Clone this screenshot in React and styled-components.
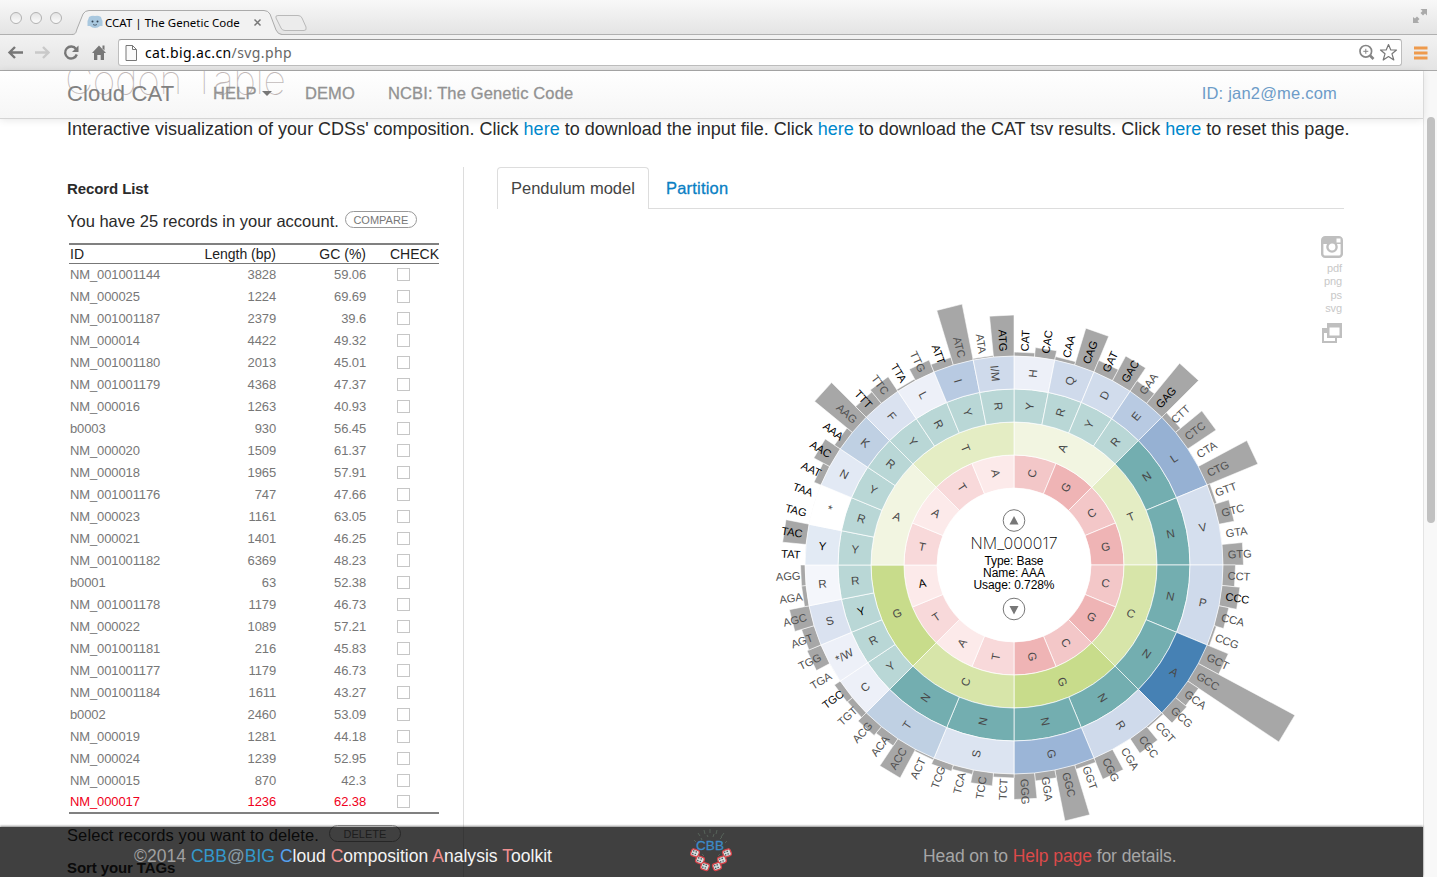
import React from 'react';
import styled, { createGlobalStyle } from 'styled-components';

const Global = createGlobalStyle`
  * { box-sizing: border-box; }
  html, body { margin: 0; padding: 0; height: 877px; overflow: hidden; background: #fff; }
  body { font-family: "Liberation Sans", Arial, sans-serif; color: #2b2b2b; }
`;

const Window = styled.div`
  display: flex; flex-direction: column; width: 1437px; height: 877px; overflow: hidden;
`;
const TitleBar = styled.div`
  display: flex; align-items: flex-end; height: 35px; flex: none; position: relative;
  background: linear-gradient(#f8f8f8, #e4e4e4); border-bottom: 1px solid #b0b0b0;
`;
const Lights = styled.div`
  display: flex; gap: 8px; padding: 0 0 10px 10px; width: 72px;
`;
const Light = styled.i`
  width: 12px; height: 12px; border-radius: 50%; border: 1px solid #b2b2b2;
  background: linear-gradient(#e4e4e4, #fbfbfb);
`;
const TabArea = styled.div`
  position: relative; width: 240px; height: 35px; margin-bottom: -1px;
`;
const TabShape = styled.svg`
  position: absolute; left: 0; top: 0;
`;
const TabContent = styled.div`
  position: relative; display: flex; align-items: center; height: 26px; margin: 9px 0 0 15px;
`;
const TabLabel = styled.span`
  font: 11.5px "Noto Sans", sans-serif; color: #000; letter-spacing: 0.02px; margin-left: 2px; white-space: nowrap; width: 148px;
`;
const Expand = styled.svg`
  margin: 0 8px 10px auto;
`;
const Toolbar = styled.div`
  display: flex; align-items: center; height: 36px; flex: none; padding: 0 9px 0 7px;
  background: linear-gradient(#f2f2f2, #e4e4e4); border-bottom: 1px solid #a9a9a9;
`;
const NavIcons = styled.div`
  display: flex; gap: 12px; width: 111px;
`;
const Address = styled.div`
  display: flex; align-items: center; flex: 1; height: 27px; background: #fff; padding: 0 3px 0 6px;
  border: 1px solid #bdbdbd; border-top-color: #989898; border-radius: 3px;
`;
const Url = styled.span`
  font: 14px "Noto Sans", sans-serif; color: #666; margin-left: 7px; flex: 1; letter-spacing: 0.38px;
  b { font-weight: 400; color: #000; }
`;
const Menu = styled.svg`
  margin-left: 12px;
`;
const Viewport = styled.div`
  display: flex; position: relative; height: 806px; flex: none;
`;
const Page = styled.main`
  width: 1423px; height: 806px; overflow: hidden; background: #fff;
`;
const Scroll = styled.div`
  width: 14px; padding: 46px 2px 0 3px; border-left: 1px solid #e4e4e4; background: #f8f8f8;
  &::before { content: ''; display: block; height: 406px; width: 8px; border-radius: 4px; background: #c1c1c1; }
`;
const Navbar = styled.nav`
  position: absolute; left: 0; top: 0; width: 1423px; height: 48px; z-index: 3;
  display: flex; align-items: center; padding: 0 86px 3px 67px; white-space: nowrap;
  background: linear-gradient(rgba(255,255,255,.72), rgba(242,242,242,.72));
  border-bottom: 1px solid #d4d4d4; box-shadow: 0 1px 8px rgba(0,0,0,.1);
`;
const Brand = styled.span`
  font-size: 22px; color: #828282; width: 146px; letter-spacing: 0.15px; padding-top: 1px;
`;
const NavItem = styled.span`
  font-size: 16.5px; color: #929292; width: ${p => p.$w}px; -webkit-text-stroke: .3px #929292;
  display: flex; align-items: center; letter-spacing: ${p => p.$ls || 0}px;
`;
const Caret = styled.i`
  border: 5px solid transparent; border-top-color: #777; border-bottom: 0; margin-left: 5px;
`;
const User = styled.span`
  margin-left: auto; font-size: 16.5px; color: #6d9cc8; letter-spacing: .2px;
`;
const Title = styled.h1`
  margin: -14px 0 0 65px; font: 100 39px/46px Inter, "Liberation Sans", sans-serif; color: #200; white-space: nowrap;
  letter-spacing: -.4px; height: 46px;
`;
const Intro = styled.p`
  margin: 14px 0 0 67px; height: 24px; line-height: 24px; font-size: 18px; white-space: nowrap;
  a { color: #0088cc; }
`;
const Columns = styled.div`
  display: flex; margin-top: 26px; height: 720px;
`;
const Left = styled.section`
  width: 464px; border-right: 1px solid #ddd; padding: 12px 24px 0 67px; white-space: nowrap;
`;
const Heading = styled.h3`
  margin: 0; font-size: 15px; line-height: 20px; letter-spacing: -0.1px;
`;
const Sentence = styled.div`
  display: flex; align-items: center; font-size: 16.5px; line-height: 20px; margin-top: ${p => p.$mt}px; letter-spacing: ${p => p.$ls || 0}px;
`;
const Pill = styled.span`
  display: flex; align-items: center; justify-content: center; width: 72px; height: 17px; margin: -4px 0 0 ${p => p.$ml}px;
  border: 1px solid #999; border-radius: 9px; font-size: 11px; line-height: 16px; padding-top: 1px; color: #777; letter-spacing: 0;
`;
const Table = styled.div`
  margin: 12px 0 0 2px; width: 370px; border-top: 2px solid #808080; border-bottom: 2px solid #808080; height: 571px;
`;
const Row = styled.div`
  display: grid; grid-template-columns: 107px 100px 90px 73px; align-items: center;
  height: ${p => p.$head ? 19 : 22}px; line-height: 18px; font-size: ${p => p.$head ? 14 : 13}px;
  color: ${p => p.$head ? '#222' : p.$active ? '#f00020' : '#777'};
  border-bottom: ${p => p.$head ? '1px solid #777' : '0'};
  margin-top: ${p => p.$active ? -1 : 0}px;
  letter-spacing: ${p => p.$head ? 0 : -0.12}px;
  span { padding-left: 1px; }
  span:nth-child(2), span:nth-child(3) { text-align: right; padding: 0; }
  span:nth-child(4) { padding-left: 24px; }
`;
const Check = styled.i`
  width: 13px; height: 13px; border: 1px solid #c6c6c6; margin: -2px 0 0 31px;
`;
const Right = styled.section`
  width: 847px; margin-left: 33px;
`;
const Tabs = styled.div`
  display: flex; height: 42px; border-bottom: 1px solid #ddd; font-size: 16.5px; line-height: 41px; white-space: nowrap;
`;
const Tab = styled.div`
  height: 42px;
  ${p => p.$on ? `width: 152px; padding-left: 13px; border: 1px solid #ddd; border-bottom: 0; border-radius: 4px 4px 0 0; background: #fff; color: #444;`
    : `padding-left: 17px; padding-top: 1px; letter-spacing: .2px; color: #0a7fc4; -webkit-text-stroke: .3px #0a7fc4;`}
`;
const Stage = styled.div`
  display: flex; align-items: flex-start; height: 617px;
`;
const Wheel = styled.svg`
  display: block; width: 820px; height: 617px; flex: none;
`;
const Exports = styled.div`
  width: 26px; padding-top: 27px; display: flex; flex-direction: column; align-items: flex-end; font-size: 11px; line-height: 13.3px; color: #c8c8c8;
  span { margin-right: 1px; letter-spacing: -.1px; }
  svg { display: block; flex: none; }
`;
const CameraIcon = styled.svg`
  margin-bottom: 4px;
`;
const WindowsIcon = styled.svg`
  margin-top: 8px;
`;
const Footer = styled.footer`
  position: absolute; left: 0; bottom: 0; width: 1423px; height: 50px; z-index: 3; white-space: nowrap;
  display: flex; align-items: center; padding: 8px 0 0 134px; background: rgba(0,0,0,.75); font-size: 17.5px; color: #a6a6a6;
  box-shadow: 0 -1px 2px rgba(0,0,0,.45);
`;
const Copyright = styled.span`
  width: 556px; color: #f4f4f4; letter-spacing: .03px;
`;
const Tint = styled.span`
  color: ${p => p.$c};
`;
const Logo = styled.svg`
  margin-top: -12px; flex: none;
`;
const Help = styled.span`
  margin-left: 191px; letter-spacing: -.07px;
`;

const RECORDS = `NM_001001144 3828 59.06
NM_000025 1224 69.69
NM_001001187 2379 39.6
NM_000014 4422 49.32
NM_001001180 2013 45.01
NM_001001179 4368 47.37
NM_000016 1263 40.93
b0003 930 56.45
NM_000020 1509 61.37
NM_000018 1965 57.91
NM_001001176 747 47.66
NM_000023 1161 63.05
NM_000021 1401 46.25
NM_001001182 6369 48.23
b0001 63 52.38
NM_001001178 1179 46.73
NM_000022 1089 57.21
NM_001001181 216 45.83
NM_001001177 1179 46.73
NM_001001184 1611 43.27
b0002 2460 53.09
NM_000019 1281 44.18
NM_000024 1239 52.95
NM_000015 870 42.3
NM_000017 1236 62.38`.split('\n').map(r => r.split(' '));

const BASE = { A: '#fceaea', T: '#f8d9da', C: '#f3c7c8', G: '#efb4b5' };
const SECOND = { A: '#f2f5e1', T: '#e4edc4', C: '#d7e5a9', G: '#c8dc8b' };
const RING1 = 'CGCGCGCGTATATATA'.split('').map(l => [l, 22.5, BASE[l]]);
const RING2 = 'ATCGCGAT'.split('').map(l => [l, 45, SECOND[l]]);
const RING3 = 'YRYRNNNNNNNNYRYRYRYRYRYR'.split('').map(l => [l, l === 'N' ? 22.5 : 11.25, l === 'N' ? '#73aeb0' : '#b9d7d6']);
const RING4 = [
  ['H', 1, '#edf0f8'], ['Q', 1, '#cfdaeb'], ['D', 1, '#d1dcec'], ['E', 1, '#b8cae2'],
  ['L', 2, '#96b1d3'], ['V', 2, '#d5dfee'], ['P', 2, '#cfdaeb'], ['A', 2, '#4681b4'],
  ['R', 2, '#cfdaeb'], ['G', 2, '#9bb5d7'], ['S', 2, '#dce4f1'], ['T', 2, '#bfd0e3'],
  ['C', 1, '#edf0f8'], ['*/W', 1, '#edf0f8'], ['S', 1, '#dae2f0'], ['R', 1, '#f4f6fb'],
  ['Y', 1, '#e2eaf4'], ['*', 1, '#ffffff'], ['N', 1, '#e2e9f4'], ['K', 1, '#bfd0e3'],
  ['F', 1, '#dae2f0'], ['L', 1, '#edf0f8'], ['I', 1, '#b8cae2'], ['I/M', 1, '#cfdaeb'],
].map(([l, n, c]) => [l, n * 11.25, c]);

// codon, bar length; "!" marks the emphasised labels
const CODONS = `CAT! 4.5,CAC! 10,CAA! 4,CAG! 39,GAT! 13,GAC! 28.5,GAA 13,GAG! 52.5,CTT 7,CTC 34.5,CTA .5,CTG 55.5,GTT 3.5,GTC 16,GTA .5,GTG 21,CCT 13,CCC! 18.5,CCA 10.5,CCG 3,GCT 23.5,GCC 110,GCA 13.5,GCG 15,CGT 2.5,CGC 18,CGA .5,CGG 23.5,GGT 5,GGC 52.5,GGA 8.5,GGG 26,TCT 4.5,TCC 13.5,TCA 5,TCG 7,ACT 2.5,ACC 33,ACA 9,ACG 12,TGT 7,TGC! 7.5,TGA .5,TGG 15.5,AGT 13.5,AGC 20.5,AGA 5,AGG 5,TAT! .5,TAC! 24,TAG! .5,TAA! .5,AAT! 8,AAC! 18.5,AAA! 7.5,AAG 49.5,TTT! 15.5,TTC 18,TTA! 2.5,TTG 13.5,ATT! 8.5,ATC 57.5,ATA 2,ATG! 41.5`
  .split(',').map(s => { const [n, h] = s.split(' '); return { name: n.replace('!', ''), bold: n.includes('!'), h: +h }; });

const pt = (r, deg) => {
  const a = (deg - 90) * Math.PI / 180;
  return `${(r * Math.cos(a)).toFixed(2)} ${(r * Math.sin(a)).toFixed(2)}`;
};
const sector = (r0, r1, a, b) => `M${pt(r0, a)}L${pt(r1, a)}A${r1} ${r1} 0 0 1 ${pt(r1, b)}L${pt(r0, b)}A${r0} ${r0} 0 0 0 ${pt(r0, a)}Z`;
const bar = (r0, r1, a, b) => `M${pt(r0, a)}L${pt(r1, a)}L${pt(r1, b)}L${pt(r0, b)}Z`;

const Sector = styled.path`
  stroke: #fff; stroke-opacity: .7; stroke-width: 1;
`;
const Bar = styled.path`
  fill: #a7a7a7; stroke: #fff; stroke-width: .8; stroke-opacity: .7;
`;
const Glyph = styled.text`
  font: 11.5px "Liberation Sans", Arial, sans-serif; fill: ${p => p.$strong ? '#000' : '#484848'}; text-anchor: middle;
`;
const Codon = styled.text`
  font: 11.1px "Liberation Sans", Arial, sans-serif; fill: ${p => p.$strong ? '#000' : '#505050'}; letter-spacing: -.1px;
`;
const CenterName = styled.text`
  font: 200 16px Inter, "Liberation Sans", sans-serif; text-anchor: middle; fill: #000;
`;
const CenterInfo = styled.text`
  font: 12px "Liberation Sans", Arial, sans-serif; text-anchor: middle; fill: #000;
`;

function Ring({ items, inner, outer, strong = [] }) {
  let at = 0;
  return items.map(([label, span, color], i) => {
    const a = at, mid = at + span / 2;
    at += span;
    const right = mid < 180;
    const r = (inner + outer) / 2;
    return (
      <g key={i}>
        <Sector d={sector(inner, outer, a, at)} fill={color} />
        <Glyph $strong={strong.includes(i)} transform={`rotate(${right ? mid - 90 : mid + 90})`} x={right ? r : -r} y="4">{label}</Glyph>
      </g>
    );
  });
}

function CodonWheel() {
  return (
    <Wheel viewBox="497 209 820 617">
      <g transform="translate(1014 565)">
        {CODONS.map((c, i) => <Bar key={c.name} d={bar(208.5, 208.5 + c.h, i * 5.625, (i + 1) * 5.625)} />)}
        <Ring items={RING1} inner={77} outer={110} strong={[11]} />
        <Ring items={RING2} inner={110} outer={143} />
        <Ring items={RING3} inner={143} outer={176} strong={[14]} />
        <Ring items={RING4} inner={176} outer={209} strong={[16]} />
        {CODONS.map((c, i) => {
          const mid = (i + .5) * 5.625, right = mid < 180;
          return (
            <Codon key={c.name} $strong={c.bold} transform={`rotate(${right ? mid - 90 : mid + 90})`}
              x={right ? 214 : -214} y="4" textAnchor={right ? 'start' : 'end'}>{c.name}</Codon>
          );
        })}
        <circle cy="-44.500" r="10.800" fill="#fff" stroke="#777" />
        <path d="M-4.500 -40.500H4.500L0 -49Z" fill="#777" />
        <circle cy="44" r="10.800" fill="#fff" stroke="#777" />
        <path d="M-4.500 41H4.500L0 49.500Z" fill="#777" />
        <CenterName y="-16" textLength="87">NM_000017</CenterName>
        <CenterInfo y="0" textLength="59">Type: Base</CenterInfo>
        <CenterInfo y="12" textLength="62">Name: AAA</CenterInfo>
        <CenterInfo y="24" textLength="81">Usage: 0.728%</CenterInfo>
      </g>
    </Wheel>
  );
}

function Browser() {
  return (
    <>
      <TitleBar>
        <Lights><Light /><Light /><Light /></Lights>
        <TabArea>
          <TabShape width="240" height="35">
            <path d="M0 34.5C4 34.5 4 32 5 29L11 14Q13 10.500 17 10.500H192Q196 10.500 198 14L204 30Q206 34.500 210 34.500V35H0Z" fill="#f2f2f2" />
            <path d="M0 34.5C4 34.5 4 32 5 29L11 14Q13 10.500 17 10.500H192Q196 10.500 198 14L204 30Q206 34.500 210 34.500" fill="none" stroke="#ababab" />
            <path d="M206 15.500H226Q229 15.500 230 18L234 27Q235 30.500 232 30.500H213Q210 30.500 209 28L204 18Q203 15.500 206 15.500Z" fill="#ececec" stroke="#b9b9b9" />
          </TabShape>
          <TabContent>
            <svg width="16" height="14" viewBox="0 0 16 14">
              <path d="M2 2Q5 0 8 1Q11 0 14 2Q14.500 4 15.500 6V11H13Q11 13 8 13Q5 13 3 11H.5V6Q1.500 4 2 2Z" fill="#a9c8df" />
              <circle cx="5.500" cy="6.500" r="1" fill="#345" /><circle cx="10.500" cy="6.500" r="1" fill="#345" />
              <path d="M6 9.500Q8 11 10 9.500" stroke="#567" fill="none" />
            </svg>
            <TabLabel>CCAT | The Genetic Code</TabLabel>
            <svg width="9" height="9" viewBox="0 0 9 9"><path d="M1.500 1.500L7.500 7.500M7.500 1.500L1.500 7.500" stroke="#777" strokeWidth="1.500" /></svg>
          </TabContent>
        </TabArea>
        <Expand width="18" height="16" viewBox="0 0 18 16" fill="#aaa">
          <path d="M9.500 1H16V7.500L14 5.500L12 7.500L9.500 5L11.500 3Z" />
          <path d="M8 15H2V9L4 10.500L6 8.500L8.500 11L6.500 13Z" />
        </Expand>
      </TitleBar>
      <Toolbar>
        <NavIcons>
          <svg width="16" height="16" viewBox="0 0 16 16" fill="none" stroke="#777" strokeWidth="2.400"><path d="M16 7.500H2.500M8 2L2.500 7.500L8 13" /></svg>
          <svg width="16" height="16" viewBox="0 0 16 16" fill="none" stroke="#c9c9c9" strokeWidth="2.400"><path d="M0 7.500H13.500M8 2L13.500 7.500L8 13" /></svg>
          <svg width="16" height="16" viewBox="0 0 16 16"><path d="M13 4A6 6 0 1 0 13.800 9.500" fill="none" stroke="#777" strokeWidth="2.400" /><path d="M15.500 .5V7H9Z" fill="#777" /></svg>
          <svg width="16" height="16" viewBox="0 0 16 16" fill="#777"><path d="M8 .5L15 8H13V15H9.700V10H6.300V15H3V8H1Z" /><path d="M11.500 .5H13.500V5.500L11.500 3.500Z" /></svg>
        </NavIcons>
        <Address>
          <svg width="13" height="16" viewBox="0 0 13 16"><path d="M1 .5H7.500L11.500 4.500V15.500H1ZM7.500 .5V4.500H11.500" fill="#fafafa" stroke="#777" /></svg>
          <Url><b>cat.big.ac.cn</b>/svg.php</Url>
          <svg width="22" height="17" viewBox="-1 0 22 17" fill="none" stroke="#858585"><circle cx="7.800" cy="7.300" r="5.800" strokeWidth="1.700" /><path d="M12 11.500L15.500 15" strokeWidth="2.600" /><path d="M5.300 7.300H10.300M7.800 4.800V9.800" /></svg>
          <svg width="19" height="19" viewBox="0 0 19 19"><path d="M9.500 1.500L11.800 7H17.500L13 10.800L14.800 17L9.500 13.500L4.200 17L6 10.800L1.500 7H7.200Z" fill="#fff" stroke="#777" strokeWidth="1.200" strokeLinejoin="round" /></svg>
        </Address>
        <Menu width="14" height="14" viewBox="0 0 14 14"><path d="M0 2H13.500M0 7H13.500M0 12H13.500" stroke="#ee9a4c" strokeWidth="3" /></Menu>
      </Toolbar>
    </>
  );
}

const STRAND = [[5, 25], [10, 32], [15, 38.5], [37, 25], [32, 32], [27, 38.5]];

function CbbLogo() {
  return (
    <Logo width="42" height="44" viewBox="0 0 42 44">
      <g stroke="#5c6b60" strokeWidth=".8">
        <path d="M8 5L10 8M14 2L15 6M20 1V5M27 2L26 6M34 5L31 9M11 10L12 12M30 11L32 9M4 12L6 14M37 13L35 15M17 7L18 9M24 6L23 9M12 26L14 28M30 26L28 28" />
      </g>
      {STRAND.map(([x, y]) => (
        <g key={`${x}-${y}`} transform={`translate(${x} ${y}) rotate(${x < 21 ? 20 : -20})`}>
          <rect x="-4" y="-3.500" width="8" height="7" rx="2" fill="#d5dede" stroke="#d6434a" strokeWidth="1.300" />
          <path d="M-2.500 -1.500H2.500M-2.500 1.300H2.500" stroke="#3d4a50" strokeWidth="1.300" strokeDasharray="1.300 1.300" />
        </g>
      ))}
      <text x="20" y="21.500" textAnchor="middle" textLength="28" fontSize="13.500" fill="#3d8bc8" fontFamily="Liberation Sans, sans-serif" stroke="#3d8bc8" strokeWidth=".3">CBB</text>
    </Logo>
  );
}

export default function App() {
  return (
    <Window>
      <Global />
      <Browser />
      <Viewport>
        <Page>
          <Title>Codon Table</Title>
          <Intro>Interactive visualization of your CDSs' composition. Click <a>here</a> to download the input file. Click <a>here</a> to download the CAT tsv results. Click <a>here</a> to reset this page.</Intro>
          <Columns>
            <Left>
              <Heading>Record List</Heading>
              <Sentence $mt={12}>You have 25 records in your account.<Pill $ml={6}>COMPARE</Pill></Sentence>
              <Table>
                <Row $head><span>ID</span><span>Length (bp)</span><span>GC (%)</span><span>CHECK</span></Row>
                {RECORDS.map(([id, len, gc]) => (
                  <Row key={id} $active={id === 'NM_000017'}><span>{id}</span><span>{len}</span><span>{gc}</span><Check /></Row>
                ))}
              </Table>
              <Sentence $mt={11} $ls={.1}>Select records you want to delete.<Pill $ml={10}>DELETE</Pill></Sentence>
              <Sentence $mt={13}><Heading>Sort your TAGs</Heading></Sentence>
            </Left>
            <Right>
              <Tabs><Tab $on>Pendulum model</Tab><Tab>Partition</Tab></Tabs>
              <Stage>
                <CodonWheel />
                <Exports>
                  <CameraIcon width="22" height="22" viewBox="0 0 22 22">
                    <rect x="1.200" y="1.200" width="19.600" height="19.600" rx="3" fill="#fff" stroke="#bfbfbf" strokeWidth="2.400" />
                    <path d="M1 8V4Q1 1 4 1H18Q21 1 21 4V8Z" fill="#bfbfbf" />
                    <circle cx="11" cy="11" r="4.600" fill="#fff" stroke="#bfbfbf" strokeWidth="2.400" />
                    <rect x="15.500" y="2.500" width="4" height="4" fill="#fff" />
                  </CameraIcon>
                  <span>pdf</span><span>png</span><span>ps</span><span>svg</span>
                  <WindowsIcon width="22" height="21" viewBox="0 0 22 21">
                    <path d="M1 5H16V20H1Z" fill="#bfbfbf" /><path d="M3 10H14V18H3Z" fill="#fff" />
                    <path d="M6 0H21V15H6Z" fill="#bfbfbf" /><path d="M8.500 4.500H18.500V12.500H8.500Z" fill="#fff" />
                  </WindowsIcon>
                </Exports>
              </Stage>
            </Right>
          </Columns>
        </Page>
        <Scroll />
        <Navbar>
          <Brand>Cloud CAT</Brand>
          <NavItem $w={92} $ls={.1}>HELP<Caret /></NavItem>
          <NavItem $w={83} $ls={.1}>DEMO</NavItem>
          <NavItem $w={200} $ls={.14}>NCBI: The Genetic Code</NavItem>
          <User>ID: jan2@me.com</User>
        </Navbar>
        <Footer>
          <Copyright><Tint $c="#a0a0a0">©2014 </Tint><Tint $c="#3498cc">CBB</Tint><Tint $c="#8a9ba5">@</Tint><Tint $c="#3498cc">BIG </Tint><Tint $c="#55a0f0">C</Tint>loud <Tint $c="#f09090">C</Tint>omposition <Tint $c="#f09090">A</Tint>nalysis <Tint $c="#f09090">T</Tint>oolkit</Copyright>
          <CbbLogo />
          <Help>Head on to <Tint $c="#dc4a4a">Help page</Tint> for details.</Help>
        </Footer>
      </Viewport>
    </Window>
  );
}
